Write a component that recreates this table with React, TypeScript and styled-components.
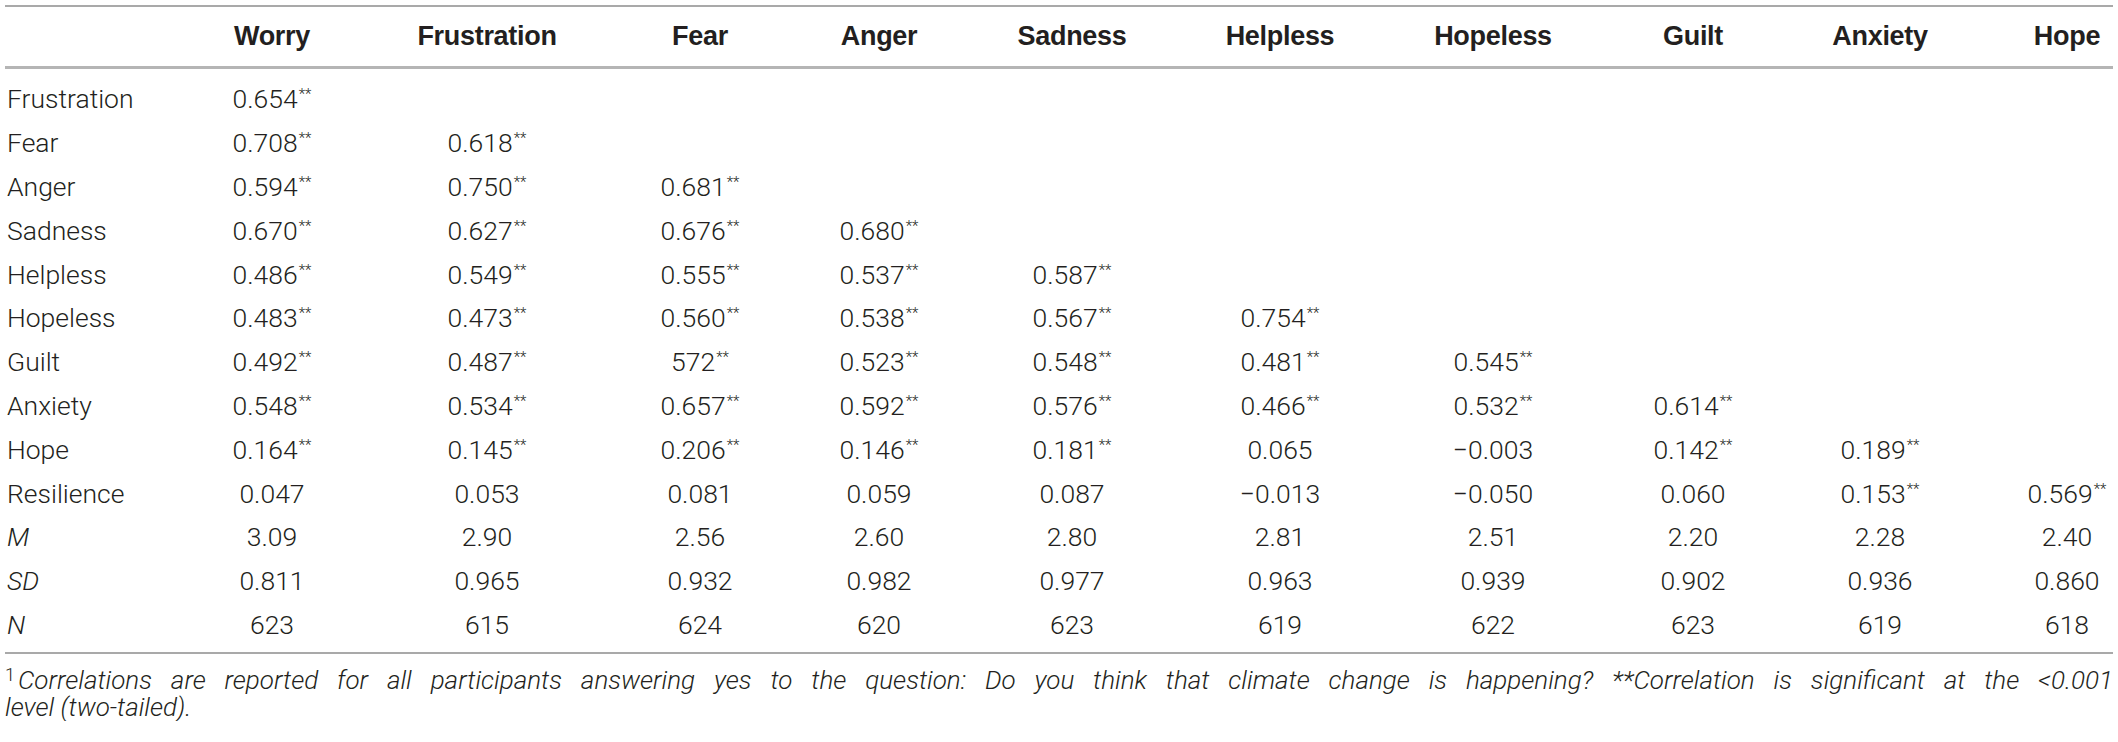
import styled, { createGlobalStyle } from "styled-components";

const GlobalStyle = createGlobalStyle`
  html, body {
    margin: 0;
    padding: 0;
    background: #ffffff;
  }
  body {
    font-family: Roboto, "Liberation Sans", Arial, sans-serif;
    color: #231f20;
  }
`;

const COLS =
  "161px 212px 218px 208px 150px 236px 180px 246px 154px 220px 123px";

const Page = styled.div`
  padding: 5px 5px 0 5px;
  width: 2108px;
`;

const Table = styled.div`
  width: 2108px;
  border-top: 2px solid #a9a9a9;
  border-bottom: 2px solid #a9a9a9;
`;

const HeaderRow = styled.div`
  display: grid;
  grid-template-columns: ${COLS};
  height: 59px;
  align-items: center;
  border-bottom: 3px solid #b5b5b5;
`;

const Body = styled.div`
  padding: 8px 0 5.6px;
`;

const Row = styled.div`
  display: grid;
  grid-template-columns: ${COLS};
  height: 43.8px;
  align-items: center;
`;

const Head = styled.div<{ $last?: boolean }>`
  font-family: "Liberation Sans", Arial, sans-serif;
  font-weight: 700;
  font-size: 27px;
  letter-spacing: -0.3px;
  text-align: center;
  padding-left: ${(p) => (p.$last ? "31px" : "0")};
  white-space: nowrap;
`;

const Label = styled.div<{ $italic?: boolean }>`
  font-weight: 300;
  font-size: 26.5px;
  font-style: ${(p) => (p.$italic ? "italic" : "normal")};
  padding-left: 2px;
  white-space: nowrap;
`;

const Cell = styled.div<{ $last?: boolean }>`
  font-weight: 300;
  font-size: 26.5px;
  text-align: center;
  padding-left: ${(p) => (p.$last ? "31px" : "0")};
  white-space: nowrap;
`;

const Stars = styled.sup`
  font-size: 15px;
  vertical-align: 9px;
  line-height: 0;
  margin-left: 1px;
`;

const Footnote = styled.div`
  margin-top: 13.5px;
  font-weight: 300;
  font-style: italic;
  font-size: 26px;
  line-height: 27px;
`;

const FirstLine = styled.div`
  text-align: justify;
  text-align-last: justify;
  white-space: nowrap;
`;

const Mark = styled.sup`
  font-style: normal;
  font-size: 18px;
  vertical-align: 8px;
  line-height: 0;
  margin-right: 3px;
`;

const headers = [
  "Worry",
  "Frustration",
  "Fear",
  "Anger",
  "Sadness",
  "Helpless",
  "Hopeless",
  "Guilt",
  "Anxiety",
  "Hope",
];

type RowData = { label: string; italic?: boolean; values: string[] };

const rows: RowData[] = [
  { label: "Frustration", values: ["0.654**"] },
  { label: "Fear", values: ["0.708**", "0.618**"] },
  { label: "Anger", values: ["0.594**", "0.750**", "0.681**"] },
  { label: "Sadness", values: ["0.670**", "0.627**", "0.676**", "0.680**"] },
  {
    label: "Helpless",
    values: ["0.486**", "0.549**", "0.555**", "0.537**", "0.587**"],
  },
  {
    label: "Hopeless",
    values: ["0.483**", "0.473**", "0.560**", "0.538**", "0.567**", "0.754**"],
  },
  {
    label: "Guilt",
    values: [
      "0.492**",
      "0.487**",
      "572**",
      "0.523**",
      "0.548**",
      "0.481**",
      "0.545**",
    ],
  },
  {
    label: "Anxiety",
    values: [
      "0.548**",
      "0.534**",
      "0.657**",
      "0.592**",
      "0.576**",
      "0.466**",
      "0.532**",
      "0.614**",
    ],
  },
  {
    label: "Hope",
    values: [
      "0.164**",
      "0.145**",
      "0.206**",
      "0.146**",
      "0.181**",
      "0.065",
      "\u22120.003",
      "0.142**",
      "0.189**",
    ],
  },
  {
    label: "Resilience",
    values: [
      "0.047",
      "0.053",
      "0.081",
      "0.059",
      "0.087",
      "\u22120.013",
      "\u22120.050",
      "0.060",
      "0.153**",
      "0.569**",
    ],
  },
  {
    label: "M",
    italic: true,
    values: ["3.09", "2.90", "2.56", "2.60", "2.80", "2.81", "2.51", "2.20", "2.28", "2.40"],
  },
  {
    label: "SD",
    italic: true,
    values: [
      "0.811",
      "0.965",
      "0.932",
      "0.982",
      "0.977",
      "0.963",
      "0.939",
      "0.902",
      "0.936",
      "0.860",
    ],
  },
  {
    label: "N",
    italic: true,
    values: ["623", "615", "624", "620", "623", "619", "622", "623", "619", "618"],
  },
];

function Value({ text }: { text: string }) {
  if (text.endsWith("**")) {
    return (
      <>
        {text.slice(0, -2)}
        <Stars>**</Stars>
      </>
    );
  }
  return <>{text}</>;
}

export default function App() {
  return (
    <Page>
      <GlobalStyle />
      <Table>
        <HeaderRow>
          <div />
          {headers.map((h, i) => (
            <Head key={h} $last={i === headers.length - 1}>
              {h}
            </Head>
          ))}
        </HeaderRow>
        <Body>
          {rows.map((r) => (
            <Row key={r.label}>
              <Label $italic={r.italic}>{r.label}</Label>
              {headers.map((h, i) => (
                <Cell key={h} $last={i === headers.length - 1}>
                  {r.values[i] ? <Value text={r.values[i]} /> : null}
                </Cell>
              ))}
            </Row>
          ))}
        </Body>
      </Table>
      <Footnote>
        <FirstLine>
          <Mark>1</Mark>Correlations are reported for all participants answering
          yes to the question: Do you think that climate change is happening?
          **Correlation is significant at the &lt;0.001
        </FirstLine>
        <div>level (two-tailed).</div>
      </Footnote>
    </Page>
  );
}
